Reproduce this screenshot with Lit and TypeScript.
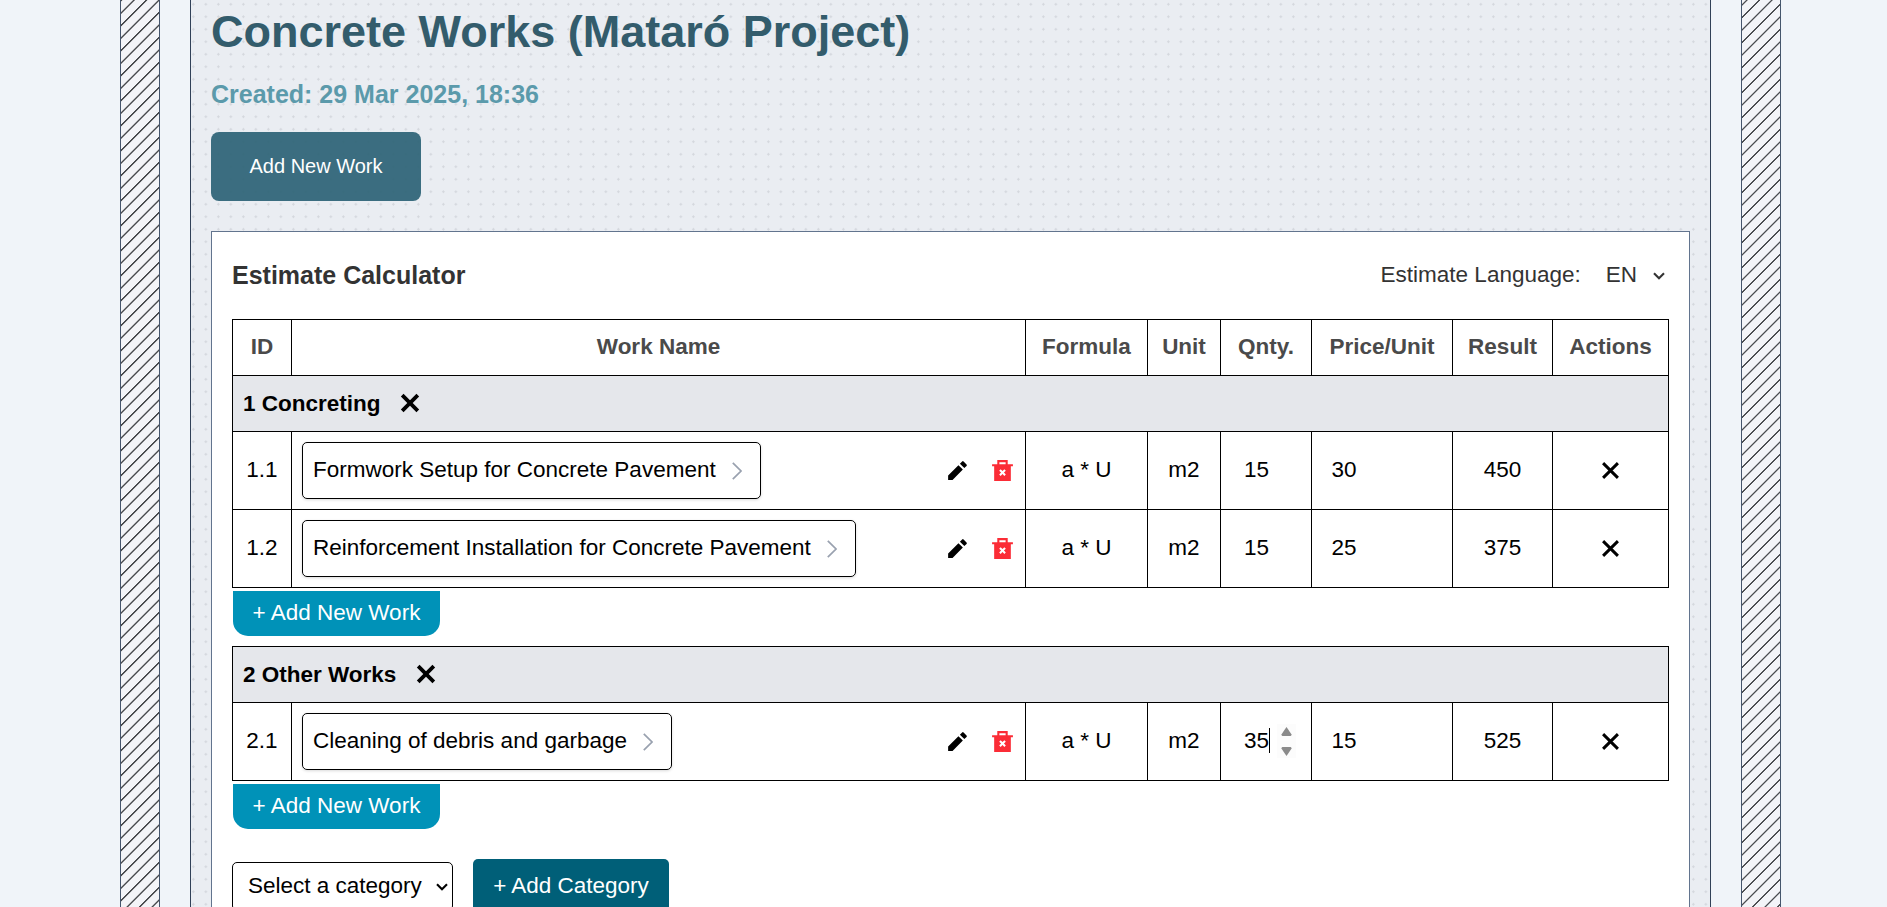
import { LitElement, html, css, svg } from "lit";
import { customElement } from "lit/decorators.js";

interface Work { id: string; name: string; qty: string; price: string; result: string; editing?: boolean; }
interface Category { title: string; works: Work[]; }

const CATEGORIES: Category[] = [
  {
    title: "1 Concreting",
    works: [
      { id: "1.1", name: "Formwork Setup for Concrete Pavement", qty: "15", price: "30", result: "450" },
      { id: "1.2", name: "Reinforcement Installation for Concrete Pavement", qty: "15", price: "25", result: "375" },
    ],
  },
  {
    title: "2 Other Works",
    works: [
      { id: "2.1", name: "Cleaning of debris and garbage", qty: "35", price: "15", result: "525", editing: true },
    ],
  },
];

const HEADERS = ["ID", "Work Name", "Formula", "Unit", "Qnty.", "Price/Unit", "Result", "Actions"];

const cross = (size: number, stroke: number) => html`<svg class="icon" width=${size} height=${size} viewBox="0 0 20 20">
  ${svg`<path d="M2.2 2.2 17.8 17.8M17.8 2.2 2.2 17.8" stroke="#000" stroke-width=${stroke} fill="none"/>`}
</svg>`;

const pencil = html`<svg class="icon" width="25" height="25" viewBox="0 0 24 24"><path d="M12.9 6.86 17.14 11.1 7.24 21H3v-4.24l9.9-9.9Zm1.42-1.41 2.12-2.12a1 1 0 0 1 1.41 0l2.83 2.83a1 1 0 0 1 0 1.41l-2.12 2.12-4.24-4.24Z"/></svg>`;

const trash = html`<svg class="icon" width="25" height="25" viewBox="0 0 24 24"><path fill="#fb2c36" fill-rule="evenodd" d="M17 6h5v2h-2v14H4V8H2V6h5V2h10v4ZM9 4v2h6V4H9Zm4.41 10 1.77-1.77-1.41-1.41L12 12.59l-1.77-1.77-1.41 1.41L10.59 14l-1.77 1.77 1.41 1.41L12 15.41l1.77 1.77 1.41-1.41L13.41 14Z"/></svg>`;

const chevronRight = html`<svg class="icon" width="10" height="18" viewBox="0 0 10 18"><path d="M.8 .8 9 9 .8 17.2" fill="none" stroke="#99a1af" stroke-width="1.7"/></svg>`;

const chevronDown = html`<svg class="icon" width="12" height="8" viewBox="0 0 12 8"><path d="M1 1.2 6 6.2 11 1.2" fill="none" stroke="currentColor" stroke-width="2.1"/></svg>`;

@customElement("app-root")
export class AppRoot extends LitElement {
  static styles = css`
    :host {
      display: block;
      height: 907px;
      overflow: hidden;
      background: #f0f4f9;
      font: 22.5px/35px "Liberation Sans", Arial, sans-serif;
      color: #000;
    }
    * { box-sizing: border-box; }
    .page {
      display: grid;
      grid-template-columns: 40px 1521px 40px;
      column-gap: 30px;
      padding-left: 120px;
      height: 100%;
    }
    .hatch {
      border: solid #45556c;
      border-width: 0 1px;
      background: #f3f4f8 repeating-linear-gradient(135deg, #4a4c50 0, #4a4c50 0.8px, transparent 1.5px, transparent 8.3px, #4a4c50 8.839px);
    }
    .hatch-right {
      background: #f3f4f8 repeating-linear-gradient(135deg, transparent 0, transparent 2.6px, #4a4c50 3.2px, #4a4c50 3.9px, transparent 4.5px, transparent 8.839px);
    }
    .sheet {
      border: solid #314158;
      border-width: 0 1px;
      padding: 4px 20px 0;
      background: #eaedf2 radial-gradient(#d4d7dd 1.25px, transparent 0) fixed -0.4px -2px / 12.5px 12.5px;
    }
    .title { margin: 0; font-size: 45px; line-height: 56px; color: #335c6c; }
    .created { margin: 16px 0 20px; font-size: 25px; font-weight: 700; line-height: 36px; color: #5b9aab; }
    .primary {
      display: block;
      width: 210px;
      height: 69px;
      border: 0;
      border-radius: 8px;
      background: rgba(48, 101, 120, 0.94);
      color: #fff;
      font: 20px "Liberation Sans", Arial, sans-serif;
    }
    .card {
      margin-top: 30px;
      border: 1px solid #62748e;
      background: #fff;
      padding: 20px;
      height: 760px;
    }
    .card-head {
      display: flex;
      justify-content: space-between;
      align-items: center;
      height: 47px;
      margin-bottom: 20px;
      color: #333;
    }
    .card-title { font-size: 25px; font-weight: 700; margin: 0; }
    .lang { display: flex; align-items: center; padding-right: 4px; }
    .lang span { padding-bottom: 2px; }
    .lang .lang-value { margin: 0 16px 0 25px; }
    .table { border: 1px solid #000; border-bottom: 0; width: 1437px; }
    .row {
      display: grid;
      grid-template-columns: 59px 734px 122px 73px 91px 141px 100px 116px;
      height: 78px;
      border-bottom: 1px solid #000;
      margin-right: -1px;
    }
    .head { height: 56px; font-weight: 700; color: #4a4a4a; }
    .cell {
      display: flex;
      align-items: center;
      justify-content: center;
      border-right: 1px solid #000;
      padding-bottom: 2px;
    }
    .left { justify-content: flex-start; padding-left: 19.5px; }
    .qty { padding-left: 23px; }
    .category {
      display: flex;
      align-items: center;
      gap: 19.5px;
      height: 56px;
      padding: 0 0 1px 10px;
      border-bottom: 1px solid #000;
      background: #e5e7eb;
      font-weight: 700;
    }
    .name { justify-content: flex-start; padding: 0 10px; }
    .action { padding: 0; }
    .pill {
      display: flex;
      align-items: center;
      gap: 16.5px;
      height: 57px;
      padding: 0 18px 0 10px;
      border: 1px solid #000;
      border-radius: 5px;
      box-shadow: 0 1px 3px rgba(0, 0, 0, 0.15);
      white-space: nowrap;
    }
    .pill span, .select span { padding-bottom: 2px; }
    .tools { display: flex; gap: 20px; margin-left: auto; }
    .icon { display: block; flex: none; }
    .add {
      display: block;
      width: 207px;
      height: 45px;
      margin: 3px 0 10px 1px;
      padding: 0 0 2px;
      border: 0;
      border-radius: 0 0 15px 15px;
      background: #0092b8;
      color: #fff;
      font: inherit;
    }
    .caret { width: 1px; height: 25px; background: #000; }
    .spin {
      display: flex;
      flex-direction: column;
      align-items: center;
      justify-content: space-between;
      width: 19px;
      height: 34px;
      margin-left: 7px;
      padding: 3px 0 2px;
      background: #fcfcfc;
    }
    .footer { display: flex; align-items: center; gap: 20px; margin-top: 30px; }
    .select {
      display: flex;
      align-items: center;
      justify-content: space-between;
      width: 221px;
      height: 49px;
      padding: 0 4px 0 15px;
      border: 1px solid #000;
      border-radius: 5px;
    }
    .add-category {
      width: 196px;
      height: 55px;
      border: 0;
      border-radius: 5px;
      background: #005f78;
      color: #fff;
      font: inherit;
      padding: 0 0 2px;
    }
  `;

  private renderWork(w: Work) {
    return html`<div class="row">
      <div class="cell">${w.id}</div>
      <div class="cell name">
        <div class="pill"><span>${w.name}</span>${chevronRight}</div>
        <div class="tools">${pencil}${trash}</div>
      </div>
      <div class="cell">a * U</div>
      <div class="cell">m2</div>
      <div class="cell left qty">${w.qty}${w.editing
        ? html`<span class="caret"></span><span class="spin">
            <svg class="icon" width="11" height="9" viewBox="0 0 10 8"><path d="M5 0 9.8 7 8.8 8H1.2L.2 7Z" fill="#8b8b8b"/></svg>
            <svg class="icon" width="11" height="9" viewBox="0 0 10 8"><path d="M5 8 .2 1 1.2 0H8.8L9.8 1Z" fill="#8b8b8b"/></svg>
          </span>`
        : ""}</div>
      <div class="cell left">${w.price}</div>
      <div class="cell">${w.result}</div>
      <div class="cell action">${cross(19, 3.1)}</div>
    </div>`;
  }

  private renderCategory(c: Category, first: boolean) {
    return html`<div class="table">
        ${first ? html`<div class="row head">${HEADERS.map((h) => html`<div class="cell">${h}</div>`)}</div>` : ""}
        <div class="category"><span>${c.title}</span>${cross(20, 3.8)}</div>
        ${c.works.map((w) => this.renderWork(w))}
      </div>
      <button class="add">+ Add New Work</button>`;
  }

  render() {
    return html`<div class="page">
      <div class="hatch"></div>
      <main class="sheet">
        <h1 class="title">Concrete Works (Mataró Project)</h1>
        <p class="created">Created: 29 Mar 2025, 18:36</p>
        <button class="primary">Add New Work</button>
        <section class="card">
          <div class="card-head">
            <h2 class="card-title">Estimate Calculator</h2>
            <div class="lang"><span>Estimate Language:</span><span class="lang-value">EN</span>${chevronDown}</div>
          </div>
          ${CATEGORIES.map((c, i) => this.renderCategory(c, i === 0))}
          <div class="footer">
            <div class="select"><span>Select a category</span>${chevronDown}</div>
            <button class="add-category">+ Add Category</button>
          </div>
        </section>
      </main>
      <div class="hatch hatch-right"></div>
    </div>`;
  }
}
